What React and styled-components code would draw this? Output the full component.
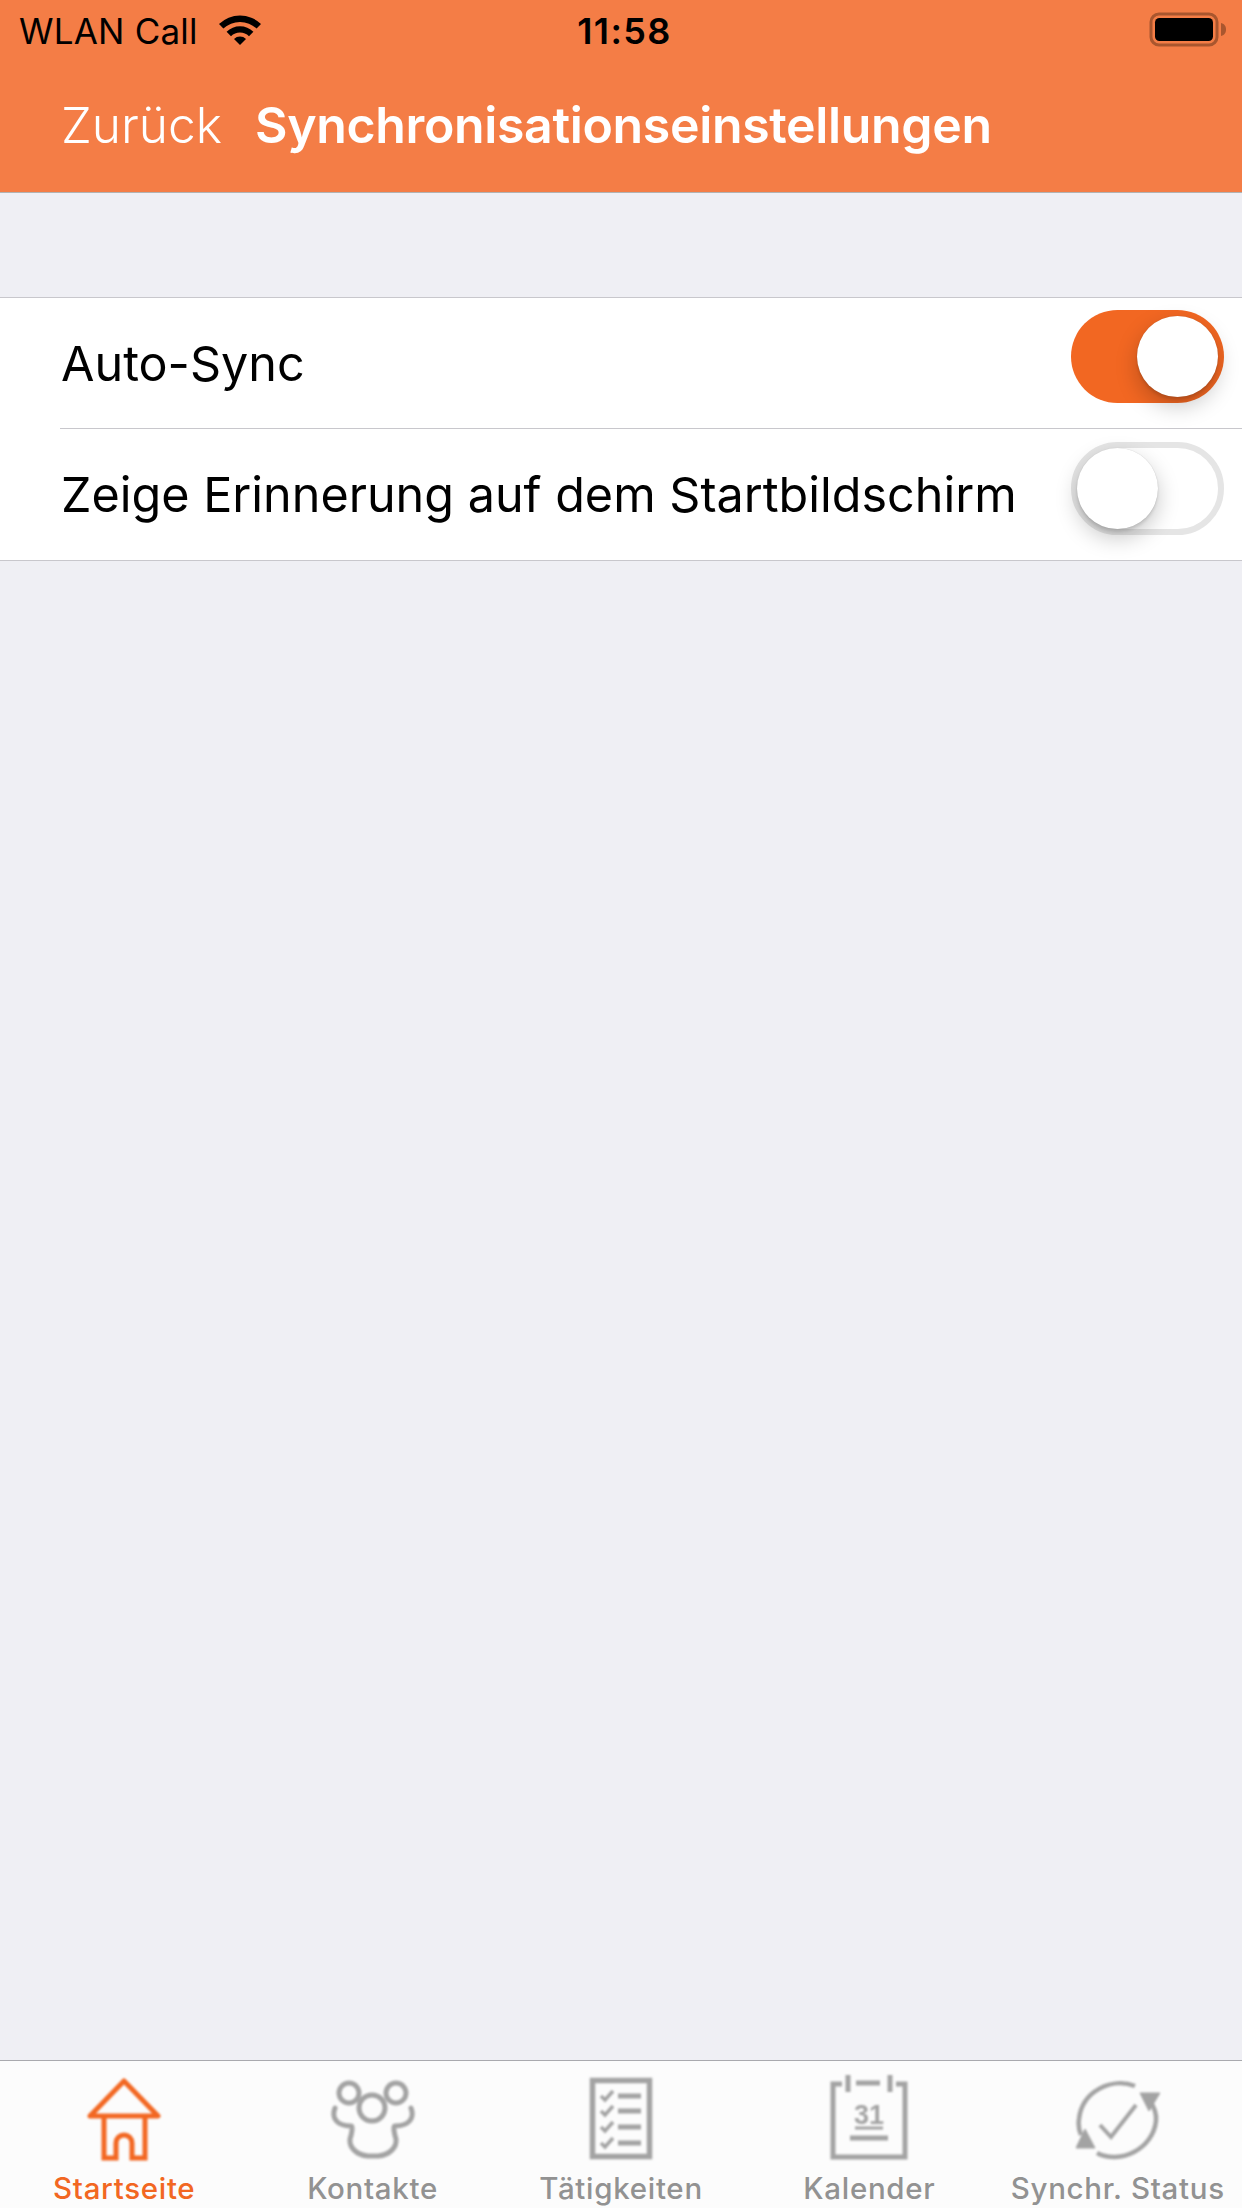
import styled, { createGlobalStyle } from 'styled-components';

const GlobalStyle = createGlobalStyle`
  html, body {
    margin: 0;
    padding: 0;
    background: #efeff4;
  }
  body {
    font-family: 'Inter', 'Liberation Sans', sans-serif;
  }
`;

function WifiIcon() {
  return (
    <svg width="44" height="32" viewBox="0 0 44 32">
      <path d="M1 11 A30 30 0 0 1 43 11 L38.6 15.6 A24 24 0 0 0 5.4 15.6 Z" fill="#000" />
      <path d="M8.6 18.8 A19 19 0 0 1 35.4 18.8 L31 23.2 A13 13 0 0 0 13 23.2 Z" fill="#000" />
      <path d="M16 26 A8.5 8.5 0 0 1 28 26 L22 32 Z" fill="#000" />
    </svg>
  );
}

function BatteryIcon() {
  return (
    <svg width="78" height="36" viewBox="0 0 78 36">
      <rect x="2" y="2" width="66" height="31" rx="8" fill="none" stroke="#a9562e" strokeWidth="3" />
      <rect x="6" y="6" width="58" height="23" rx="4.5" fill="#000" />
      <path d="M72 11 C76 12 77 15 77 17.5 C77 20 76 23 72 24 Z" fill="#a9562e" />
    </svg>
  );
}

function HomeIcon() {
  return (
    <svg width="76" height="84" viewBox="0 0 76 84" fill="none" stroke="#f26722" strokeWidth="5">
      <path d="M38 4 L72 39 H4 Z" strokeLinejoin="round" />
      <path d="M18 39 V81 H30 V66 A8 8 0 0 1 46 66 V81 H59 V39" />
    </svg>
  );
}

function ContactsIcon() {
  return (
    <svg width="90" height="84" viewBox="0 0 90 84" fill="none" stroke="#a3a3a3" strokeWidth="5" strokeLinecap="round">
      <circle cx="21" cy="16" r="10" />
      <circle cx="68" cy="16" r="10" />
      <circle cx="44" cy="31" r="13" />
      <path d="M7 31 C3 41 9 49 23 49 C25 49 24 56 22 62 C21 70 28 78 40 79 H50 C62 78 69 70 68 62 C66 56 65 49 67 49 C81 49 87 41 83 31" />
    </svg>
  );
}

function TasksIcon() {
  const rows = [19, 34, 50, 66];
  return (
    <svg width="64" height="84" viewBox="0 0 64 84" fill="none" stroke="#a3a3a3">
      <rect x="3.5" y="3.5" width="57" height="76" strokeWidth="5.5" />
      {rows.map((y) => (
        <g key={y}>
          <path d={`M12 ${y} l4 4 l8 -9`} strokeWidth="3.5" />
          <path d={`M29 ${y} H52`} strokeWidth="5" />
        </g>
      ))}
    </svg>
  );
}

function CalendarIcon() {
  return (
    <svg width="78" height="86" viewBox="0 0 78 86" fill="none" stroke="#a3a3a3" strokeWidth="5">
      <path d="M12 9 H3 V82 H75 V9 H66" />
      <path d="M18 0 V17 M60 0 V17" />
      <path d="M26 8 H50" />
      <path d="M25 53 H53" strokeWidth="3" />
      <path d="M20 63 H58" />
      <text x="39" y="49" textAnchor="middle" fontSize="27" fontWeight="700" fill="#a3a3a3" stroke="none" fontFamily="'Liberation Sans', sans-serif">31</text>
    </svg>
  );
}

function SyncIcon() {
  return (
    <svg width="84" height="80" viewBox="0 0 84 80" fill="none" stroke="#a3a3a3" strokeWidth="4.5">
      <path d="M59 5 C36 -4 6 10 3 38 C2 44 3 49 5 54" />
      <path d="M21 72 C44 84 77 68 80 40 C81 32 77 24 73 18" />
      <path d="M64 12 H84 L73 30 Z" fill="#a3a3a3" strokeWidth="1" />
      <path d="M0 67 H19 L9 48 Z" fill="#a3a3a3" strokeWidth="1" />
      <path d="M24 44 L35 56 L60 24" strokeWidth="4" />
    </svg>
  );
}

const tabs = [
  { label: 'Startseite', Icon: HomeIcon, active: true },
  { label: 'Kontakte', Icon: ContactsIcon },
  { label: 'Tätigkeiten', Icon: TasksIcon },
  { label: 'Kalender', Icon: CalendarIcon },
  { label: 'Synchr. Status', Icon: SyncIcon },
];

const settings = [
  { label: 'Auto-Sync', on: true },
  { label: 'Zeige Erinnerung auf dem Startbildschirm', on: false },
];

export default function App() {
  return (
    <Page>
      <GlobalStyle />
      <Header>
        <StatusBar>
          <Carrier>
            WLAN Call
            <WifiIcon />
          </Carrier>
          <Clock>11:58</Clock>
          <BatterySlot>
            <BatteryIcon />
          </BatterySlot>
        </StatusBar>
        <NavBar>
          <BackLabel>Zurück</BackLabel>
          <NavTitle>Synchronisationseinstellungen</NavTitle>
        </NavBar>
      </Header>
      <Content>
        <SettingsList>
          {settings.map((item) => (
            <SettingRow key={item.label}>
              <SettingLabel>{item.label}</SettingLabel>
              <Toggle $on={item.on}>
                <Knob $on={item.on} />
              </Toggle>
            </SettingRow>
          ))}
        </SettingsList>
      </Content>
      <TabBar>
        {tabs.map(({ label, Icon, active }) => (
          <TabItem key={label}>
            <TabIcon>
              <Icon />
            </TabIcon>
            <TabLabel $active={active}>{label}</TabLabel>
          </TabItem>
        ))}
      </TabBar>
    </Page>
  );
}

const Page = styled.div`
  display: flex;
  flex-direction: column;
  width: 1242px;
  height: 2208px;
  overflow: hidden;
  background: #efeff4;
`;

const Header = styled.header`
  flex: none;
  height: 192px;
  background: #f47d46;
  border-bottom: 1px solid #b2b2b2;
`;

const StatusBar = styled.div`
  display: grid;
  grid-template-columns: 1fr auto 1fr;
  align-items: center;
  height: 62px;
  padding: 0 0 0 19px;
  color: #000;
`;

const Carrier = styled.div`
  display: flex;
  align-items: center;
  gap: 20px;
  font-size: 35px;
  letter-spacing: 0.2px;

  svg {
    margin-top: -4px;
  }
`;

const Clock = styled.div`
  margin-left: -12px;
  font-size: 36px;
  font-weight: 600;
  letter-spacing: 1.4px;
`;

const BatterySlot = styled.div`
  display: flex;
  justify-content: flex-end;
  padding-right: 15px;

  svg {
    margin-top: -3px;
  }
`;

const NavBar = styled.div`
  display: flex;
  align-items: center;
  gap: 33px;
  height: 130px;
  padding: 0 0 5px 61px;
  box-sizing: border-box;
  color: #fff;
`;

const BackLabel = styled.span`
  font-size: 49.6px;
  font-weight: 300;
`;

const NavTitle = styled.span`
  font-size: 50px;
  font-weight: 600;
  letter-spacing: -0.35px;
`;

const Content = styled.main`
  flex: 1;
  padding-top: 104px;
`;

const SettingsList = styled.section`
  background: #fff;
  border-top: 1px solid #c8c7cc;
  border-bottom: 1px solid #c8c7cc;
`;

const SettingRow = styled.div`
  display: flex;
  align-items: center;
  justify-content: space-between;
  height: 130px;
  margin-left: 60px;
  padding-right: 18px;
  box-sizing: border-box;

  & + & {
    height: 132px;
    border-top: 1px solid #c8c7cc;
  }
`;

const SettingLabel = styled.span`
  margin-left: 1px;
  font-size: 48.5px;
  color: #000;
`;

const Toggle = styled.div`
  position: relative;
  flex: none;
  width: 153px;
  height: 93px;
  margin-bottom: 13px;
  box-sizing: border-box;
  border-radius: 47px;
  background: ${({ $on }) => ($on ? '#f26722' : '#fff')};
  border: ${({ $on }) => ($on ? 'none' : '6px solid #e5e5e5')};
`;

const Knob = styled.div`
  position: absolute;
  top: ${({ $on }) => ($on ? '6px' : '0')};
  left: ${({ $on }) => ($on ? '66px' : '0')};
  width: 81px;
  height: 81px;
  border-radius: 50%;
  background: #fff;
  box-shadow: 0 9px 22px rgba(0, 0, 0, 0.22), 0 3px 3px rgba(0, 0, 0, 0.1), 0 0 1px rgba(0, 0, 0, 0.2);
`;

const TabBar = styled.nav`
  flex: none;
  display: grid;
  grid-template-columns: repeat(5, 1fr);
  height: 148px;
  box-sizing: border-box;
  background: #fcfcfc;
  border-top: 1px solid #a9a9ae;
`;

const TabItem = styled.div`
  display: flex;
  flex-direction: column;
  align-items: center;
`;

const TabIcon = styled.div`
  display: flex;
  align-items: flex-end;
  justify-content: center;
  height: 100px;

  svg {
    filter: blur(0.9px);
  }
`;

const TabLabel = styled.span`
  margin-top: 9px;
  font-size: 29.5px;
  font-weight: 500;
  letter-spacing: 0.7px;
  white-space: nowrap;
  color: ${({ $active }) => ($active ? '#f26722' : '#929292')};
`;
